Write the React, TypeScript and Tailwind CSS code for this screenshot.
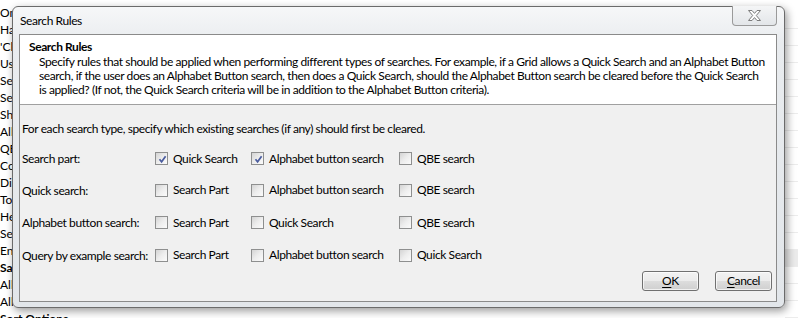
import React from "react";

// property names behind the dialog; only their first letters show
const bgRows: { text: string; bold?: boolean }[] = [
  { text: "Om" },
  { text: "Ha" },
  { text: "'Cl" },
  { text: "Us" },
  { text: "Se" },
  { text: "Se" },
  { text: "Sh" },
  { text: "All" },
  { text: "QB" },
  { text: "Co" },
  { text: "Dis" },
  { text: "To" },
  { text: "He" },
  { text: "Se" },
  { text: "En" },
  { text: "Sa", bold: true },
  { text: "All" },
  { text: "All" },
];

function CheckBox({ checked }: { checked?: boolean }) {
  return (
    <span className="relative flex h-[13px] w-[13px] shrink-0 items-center justify-center border border-[#8e8f8f] bg-white">
      <span className="h-[11px] w-[11px] bg-gradient-to-br from-[#d4d4d4] via-[#ededed] to-[#fbfbfb]" />
      {checked && (
        <svg className="absolute left-[1px] top-[1px]" width="11" height="11" viewBox="0 0 11 11">
          <path d="M2.5 5.2 L4.6 7.8 L8.6 2.2" fill="none" stroke="#4a5c9e" strokeWidth="1.7" />
        </svg>
      )}
    </span>
  );
}

function Option({ label, checked, w }: { label: string; checked?: boolean; w: string }) {
  return (
    <div className={`flex items-center gap-[5px] whitespace-nowrap ${w}`}>
      <CheckBox checked={checked} />
      <span>{label}</span>
    </div>
  );
}

const rules = [
  { label: "Search part:", h: "mt-[7px] h-[31px]", opts: [["Quick Search", true], ["Alphabet button search", true], ["QBE search", false]] },
  { label: "Quick search:", h: "h-[32px]", opts: [["Search Part", false], ["Alphabet button search", false], ["QBE search", false]] },
  { label: "Alphabet button search:", h: "h-[33px]", opts: [["Search Part", false], ["Quick Search", false], ["QBE search", false]] },
  { label: "Query by example search:", h: "h-[32px]", opts: [["Search Part", false], ["Alphabet button search", false], ["Quick Search", false]] },
] as const;

function Button({ first, rest }: { first: string; rest: string }) {
  return (
    <button className="flex h-[20px] w-[57px] items-center justify-center rounded-[3px] border border-[#707070] bg-[linear-gradient(#f2f2f2_0%,#ebebeb_50%,#dddddd_51%,#cfcfcf_100%)] text-[12px] leading-[14px] text-black shadow-[inset_0_0_0_1px_rgba(255,255,255,0.7)]">
      <span className="underline underline-offset-2">{first}</span>
      {rest}
    </button>
  );
}

export default function App() {
  return (
    <div className="relative h-[318px] w-[798px] overflow-hidden bg-white font-['Lato',sans-serif] text-[12px] text-black">
      {/* property list behind the dialog */}
      <div className="flex flex-col pt-[4px] leading-[17px]">
        <div className="flex w-[13px] flex-col overflow-hidden">
          {bgRows.map((r, i) => (
            <div key={i} className={`whitespace-nowrap ${r.bold ? "font-bold" : ""}`}>
              {r.text}
            </div>
          ))}
        </div>
        <div className="whitespace-nowrap font-bold">Sort Options</div>
      </div>

      {/* grid lines at right */}
      <div className="absolute left-[785px] top-[12px] flex w-[13px] flex-col">
        {Array.from({ length: 18 }).map((_, i) => (
          <div key={i} className={`h-[17px] border-b border-[#ececec] ${i === 14 ? "bg-[#ebebeb]" : ""}`} />
        ))}
      </div>

      {/* dialog window */}
      <div className="absolute left-[12px] top-[6px] flex h-[302px] w-[773px] flex-col rounded-[6px] border border-[#6b6b6b] bg-[linear-gradient(180deg,#f6f7f8_0%,#e9ecef_12%,#e2e6ea_100%)] pb-[5px] pl-[6px] pr-[7px] tracking-[-0.4px] shadow-[2px_3px_8px_rgba(0,0,0,0.4)]">
        <div className="flex h-[27px] shrink-0 items-start justify-between">
          <div className="pl-[1px] pt-[6px] text-[12px] leading-[15px]">Search Rules</div>
          <div className="-mt-[1px] flex h-[20px] w-[45px] items-center justify-center rounded-b-[4px] border border-t-0 border-[#9a9a9a] bg-[linear-gradient(#f4f5f6,#e3e6e9)]">
            <svg width="15" height="11" viewBox="0 0 15 11">
              <path
                d="M1.5 0.5 H5 L7.5 3.4 L10 0.5 H13.5 L9.3 5.5 L13.5 10.5 H10 L7.5 7.6 L5 10.5 H1.5 L5.7 5.5 Z"
                fill="#ffffff"
                stroke="#7c7c7c"
                strokeWidth="1"
                strokeLinejoin="round"
              />
            </svg>
          </div>
        </div>

        {/* client area */}
        <div className="flex flex-1 flex-col overflow-hidden border border-[#8a8a8a] bg-[#f0f0f0]">
          <div className="h-[70px] shrink-0 border-b border-[#a0a0a0] bg-white pl-[9px] pt-[4px]">
            <div className="font-bold leading-[16px]">Search Rules</div>
            <p className="whitespace-nowrap pl-[10px] leading-[14px]">
              Specify rules that should be applied when performing different types of searches. For example, if a Grid allows a Quick Search and an Alphabet Button
              <br />
              search, if the user does an Alphabet Button search, then does a Quick Search, should the Alphabet Button search be cleared before the Quick Search
              <br />
              is applied? (If not, the Quick Search criteria will be in addition to the Alphabet Button criteria).
            </p>
          </div>

          <div className="flex flex-1 flex-col pl-[2px]">
            <div className="mt-[16px] h-[15px] shrink-0 whitespace-nowrap leading-[15px]">
              For each search type, specify which existing searches (if any) should first be cleared.
            </div>
            {rules.map((r) => (
              <div key={r.label} className={`flex shrink-0 items-center ${r.h}`}>
                <div className="w-[133px] whitespace-nowrap leading-[15px]">{r.label}</div>
                <Option label={r.opts[0][0]} checked={r.opts[0][1]} w="w-[96px]" />
                <Option label={r.opts[1][0]} checked={r.opts[1][1]} w="w-[148px]" />
                <Option label={r.opts[2][0]} checked={r.opts[2][1]} w="w-[150px]" />
              </div>
            ))}
            <div className="mt-auto flex justify-end gap-[16px] pb-[10px] pr-[4px]">
              <Button first="O" rest="K" />
              <Button first="C" rest="ancel" />
            </div>
          </div>
        </div>
      </div>
    </div>
  );
}
